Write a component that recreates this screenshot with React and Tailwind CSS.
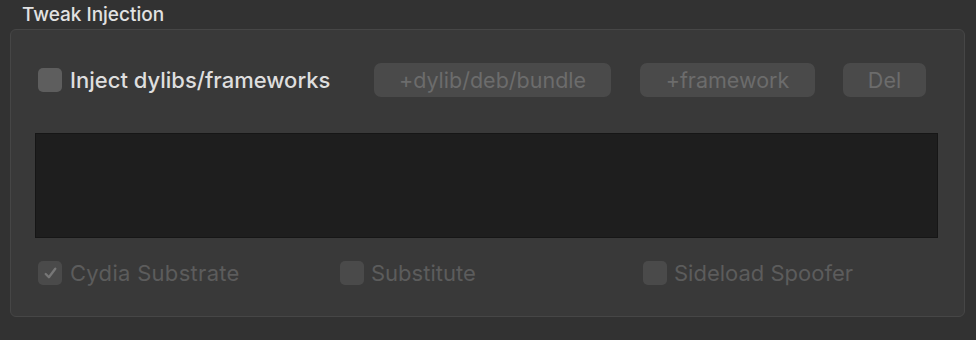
import React from 'react';

const font = { fontFamily: '"Inter", "Noto Sans", sans-serif' };

const Box = ({ checked, dim }) => (
  <span
    className={`flex h-[24px] w-[24px] shrink-0 items-center justify-center rounded-[5px] ${
      dim ? 'bg-[#4a4a4a]' : 'bg-[#5e5e5e]'
    }`}
  >
    {checked && (
      <svg viewBox="0 0 16 16" className="h-[17px] w-[17px]" fill="none">
        <path d="M3.5 8.5 L6.5 11.5 L12.5 3.5" stroke="#777" strokeWidth="2.2" strokeLinecap="round" strokeLinejoin="round" />
      </svg>
    )}
  </span>
);

const Btn = ({ children, w }) => (
  <div className={`flex h-[34px] ${w} items-center justify-center rounded-[7px] bg-[#4a4a4a] text-[21.5px] text-[#6c6c6c]`}>
    {children}
  </div>
);

export default function App() {
  return (
    <div className="h-[340px] w-[976px] bg-[#323232] px-[10px] pt-[4px]" style={font}>
      <div className="pl-[12px] text-[19px] font-medium leading-[22px] text-[#e2e2e2]">Tweak Injection</div>
      <div className="mt-[3px] h-[288px] w-[955px] rounded-[6px] border border-[#464646] bg-[#393939] px-[24px] pt-[33px]">
        <div className="flex h-[34px] items-center">
          <div className="flex w-[339px] shrink-0 items-center gap-[8px] pl-[3px]">
            <Box />
            <span className="text-[22px] font-medium text-[#dedede]">Inject dylibs/frameworks</span>
          </div>
          <div className="flex items-center">
            <Btn w="w-[237px]">+dylib/deb/bundle</Btn>
            <div className="w-[29px]" />
            <Btn w="w-[175px]">+framework</Btn>
            <div className="w-[28px]" />
            <Btn w="w-[83px]">Del</Btn>
          </div>
        </div>
        <div className="mt-[36px] h-[105px] w-[903px] border border-[#161616] bg-[#1e1e1e]" />
        <div className="mt-[22px] flex h-[26px] items-center pl-[3px] text-[22px] text-[#5c5c5c]">
          <div className="flex w-[302px] items-center gap-[8px]">
            <Box checked dim />
            <span className="tracking-[0.3px]">Cydia Substrate</span>
          </div>
          <div className="flex w-[303px] items-center gap-[7px]">
            <Box dim />
            <span>Substitute</span>
          </div>
          <div className="flex items-center gap-[7px]">
            <Box dim />
            <span>Sideload Spoofer</span>
          </div>
        </div>
      </div>
    </div>
  );
}
